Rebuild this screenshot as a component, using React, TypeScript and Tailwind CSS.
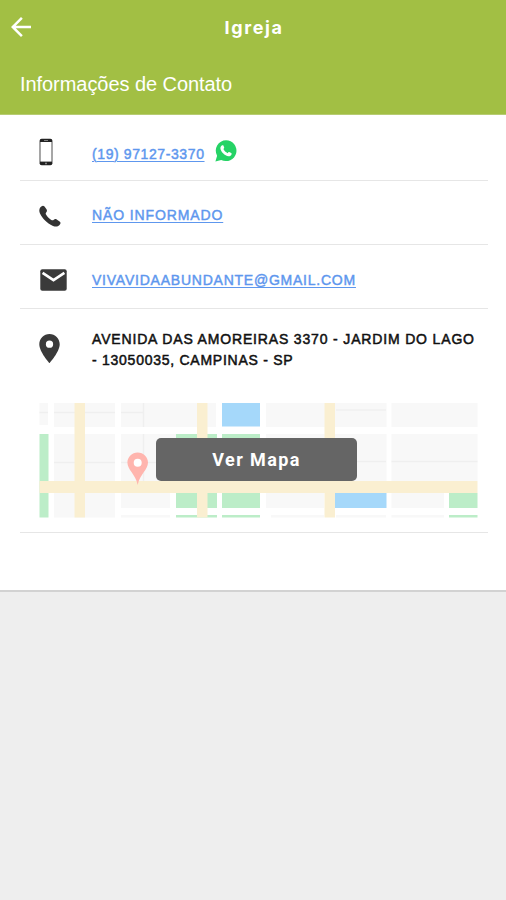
import type { ReactNode } from "react";
import { MdArrowBack, MdPlace } from "react-icons/md";

const linkClass =
  "text-[#5e97ee] underline decoration-1 underline-offset-2 [-webkit-text-stroke:0.45px_#5e97ee]";

function MobileIcon() {
  return (
    <svg className="h-[28px] w-[14px]" viewBox="0 0 14 28">
      <rect x="0.6" y="0.8" width="12.8" height="26.4" rx="2" fill="#222" />
      <rect x="1.4" y="4" width="11.2" height="19.6" fill="#fff" />
      <rect x="5" y="2" width="4" height="0.8" fill="#999" />
      <circle cx="7" cy="25.4" r="0.9" fill="#999" />
    </svg>
  );
}

function HandsetIcon() {
  return (
    <svg className="h-[22px] w-[22px]" viewBox="0 0 22 22">
      <path
        d="M1.400 2.300C2.800.7 4.400.3 5.500 1.600l2 2.700c.7 1 .6 2-.2 2.900-.7.800-.8 1.400-.3 2.400 1.200 2.200 3 4 5.300 5.300 1 .5 1.700.5 2.500-.2.900-.8 1.900-.9 2.900-.2l2.900 2c1.400 1 1.200 2.400-.3 3.800-1.500 1.500-3.800 1.700-6.300.6C7.600 18 3.700 14 1 8.600-.1 6.200.1 4 1.400 2.300z"
        fill="#333"
      />
    </svg>
  );
}

function MailIcon() {
  return (
    <svg className="ml-[0.500px] h-[22px] w-[27px]" viewBox="0 0 27 22">
      <rect x="0.300" y="0.300" width="26.400" height="21.400" rx="2" fill="#3a3a3a" />
      <path d="M2.600 3.900l10.900 7.300 10.900-7.300" fill="none" stroke="#fff" strokeWidth="2.600" />
    </svg>
  );
}

function WhatsAppIcon() {
  return (
    <svg className="h-[22px] w-[22px]" viewBox="0 0 22 22">
      <path
        d="M11.1 0.3a10.3 10.3 0 0 0-9 15.4L0.4 21.4l5.8-1.5A10.4 10.4 0 1 0 11.1 0.3z"
        fill="#26d366"
      />
      <path
        d="M7.2 5.3c.4-.3 1-.2 1.2.3l.8 1.9c.1.4 0 .7-.8 1.6.9 1.9 2.300 3.200 4.300 4.100.9-1.100 1.100-1.300 1.500-1.100l2 .9c.5.3.5.8.3 1.400-.4 1.200-1.700 1.900-2.900 1.800-3.800-.4-8.100-4.700-8.200-8 0-1.200.7-2.200 1.800-2.900z"
        fill="#fff"
      />
    </svg>
  );
}

function MapPreview() {
  return (
    <svg className="block h-[115px] w-[439px]" viewBox="39 403 439 115">
      <g fill="#f8f8f8">
        <path d="M39.500 403h8.500v22h-8.500zM54 403h61v24H54zM121 403h95v24h-95zM266 403h120.500v24H266zM391.500 403h86v24h-86z" />
        <path d="M54 434h61v47H54zM121 434h55v47h-55zM266 434h120.500v47H266zM391.500 434h86v47h-86z" />
        <path d="M54 493h61v24.500H54zM121 493h49v15h-49zM266 493h58v15h-58zM391.500 493H444v15h-52.500z" />
        <path d="M121 515h49v2.500h-49zM271 515h53v2.500h-53zM336 515h50v2.500h-50zM391.500 515H444v2.500h-52.500z" />
      </g>
      <path
        d="M39.500 412.500H48M54 412.500h21M85 412.500h30M121 412.500h22M143.500 403v24M143.500 434v47M54 462.500h61M121 462.500h55M336 410h50M336 461.500h50M391.500 461.500h86"
        stroke="#efefef"
        strokeWidth="1.500"
      />
      <g fill="#bcedc8">
        <path d="M39.500 434H48.500v83.500h-9zM176 434h41v74h-41zM222 434h38v74h-38zM449 493h28.500v15H449z" />
        <path d="M176 515h41v2.500h-41zM222 515h38v2.500h-38zM449 515h28.500v2.500H449z" />
      </g>
      <path d="M222 403h38v23.500h-38zM335 493h51.500v15H335z" fill="#a5d8fa" />
      <path
        d="M74.500 403H85v114.500H74.500zM197 403h10.500v114.500H197zM324.500 403H335v114.500h-10.500zM39.500 481h438v12h-438z"
        fill="#faefd1"
      />
      <path
        d="M137.700 452.500c-5.700 0-10.300 4.500-10.300 10.100 0 7.300 8 11.400 10.300 22.400 2.300-11 10.300-15.100 10.300-22.400 0-5.600-4.600-10.100-10.300-10.100z"
        fill="#ffb5ae"
      />
      <circle cx="137.700" cy="462.800" r="4" fill="#fff" />
    </svg>
  );
}

function Row({ icon, height, children }: { icon: ReactNode; height: string; children: ReactNode }) {
  return (
    <div className={`mr-[18px] ml-5 flex items-center border-b border-[#e6e6e6] pl-[19px] ${height}`}>
      <div className="flex w-[53px] shrink-0 items-center">{icon}</div>
      {children}
    </div>
  );
}

export default function App() {
  return (
    <div className="h-[900px] w-[506px] overflow-hidden bg-[#eeeeee] font-['Liberation_Sans',Arial,sans-serif]">
      <header className="h-[115px] border-b border-[#b7cc73] bg-[#a2bf44] text-white">
        <div className="grid h-[55px] grid-cols-[100px_1fr_100px] items-center">
          <MdArrowBack className="-mt-px ml-[6px] h-[30px] w-[30px]" />
          <h1 className="pl-[2px] text-center font-['Inter',sans-serif] text-[18px] font-bold tracking-[1.600px]">
            Igreja
          </h1>
        </div>
        <h2 className="pt-[15px] pl-5 text-[20px] leading-[28px] tracking-[-0.060px]">Informações de Contato</h2>
      </header>

      <main className="h-[477px] border-b-2 border-[#d2d2d2] bg-white text-[14px]">
        <Row icon={<MobileIcon />} height="h-[66px] pt-[9px]">
          <a className={`${linkClass} mt-1 tracking-[0.600px]`}>(19) 97127-3370</a>
          <span className="mb-[3px] ml-[10px]">
            <WhatsAppIcon />
          </span>
        </Row>
        <Row icon={<HandsetIcon />} height="h-[64px] pt-[6px]">
          <a className={`${linkClass} tracking-[0.880px]`}>NÃO INFORMADO</a>
        </Row>
        <Row icon={<MailIcon />} height="h-[64px] pt-[6px]">
          <a className={`${linkClass} mt-px tracking-[0.770px]`}>VIVAVIDAABUNDANTE@GMAIL.COM</a>
        </Row>
        <section className="mr-[18px] ml-5 h-[224px] border-b border-[#e6e6e6]">
          <div className="flex pt-[20px] pl-[19px]">
            <div className="w-[53px] shrink-0 pt-[2px]">
              <MdPlace className="-ml-[7px] h-[35px] w-[35px] text-[#3a3a3a]" />
            </div>
            <address className="leading-[21px] tracking-[0.840px] whitespace-nowrap text-[#111] not-italic [-webkit-text-stroke:0.5px_#111]">
              AVENIDA DAS AMOREIRAS 3370 - JARDIM DO LAGO
              <br />
              <span className="tracking-[0.740px]">- 13050035, CAMPINAS - SP</span>
            </address>
          </div>
          <div className="relative mt-[32px] ml-[19px] w-[439px]">
            <MapPreview />
            <button className="absolute top-[35px] left-[117px] h-[43px] w-[201px] rounded-[5px] bg-[#656565] font-['Roboto',sans-serif] text-[18px] font-bold tracking-[1.400px] text-white">
              Ver Mapa
            </button>
          </div>
        </section>
      </main>
    </div>
  );
}
